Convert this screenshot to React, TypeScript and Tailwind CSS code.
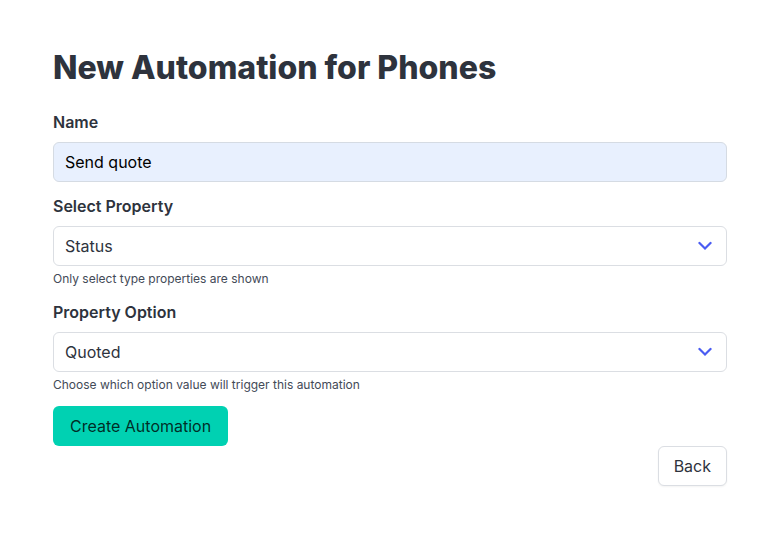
export default function App() {
  const Chevron = () => (
    <svg
      aria-hidden
      className="pointer-events-none absolute right-[15px] top-1/2 -translate-y-1/2"
      width="14"
      height="9"
      viewBox="0 0 14 9"
      fill="none"
    >
      <path d="M1.5 1.5 L7 7 L12.5 1.5" stroke="#4a5cf2" strokeWidth="2.2" strokeLinecap="square" />
    </svg>
  );

  return (
    <div className="min-h-screen bg-white px-[53px] pt-[50px] font-['Inter',sans-serif] text-[#2e333d]">
      <h1 className="mb-6 text-[32px] font-extrabold leading-[36px] text-[#2e333d]">
        New Automation for Phones
      </h1>

      {/* Name */}
      <div className="mb-3">
        <label className="mb-2 block text-[16px] font-semibold leading-6">Name</label>
        <input
          readOnly
          value="Send quote"
          className="h-10 w-full rounded-md border border-[#d5dbe3] bg-[#e8f0fe] px-[11px] text-[16px] text-black outline-none"
        />
      </div>

      {/* Select Property */}
      <div className="mb-3">
        <label className="mb-2 block text-[16px] font-semibold leading-6">Select Property</label>
        <div className="relative">
          <div className="flex h-10 w-full items-center rounded-md border border-[#dbdee3] bg-white px-[11px] text-[16px] text-[#2e333d]">
            Status
          </div>
          <Chevron />
        </div>
        <p className="mt-1 text-[12px] leading-[18px] text-[#434a57]">Only select type properties are shown</p>
      </div>

      {/* Property Option */}
      <div className="mb-3">
        <label className="mb-2 block text-[16px] font-semibold leading-6">Property Option</label>
        <div className="relative">
          <div className="flex h-10 w-full items-center rounded-md border border-[#dbdee3] bg-white px-[11px] text-[16px] text-[#2e333d]">
            Quoted
          </div>
          <Chevron />
        </div>
        <p className="mt-1 text-[12px] leading-[18px] text-[#434a57]">
          Choose which option value will trigger this automation
        </p>
      </div>

      <button className="h-10 rounded-md bg-[#00d1b2] px-[17px] text-[16px] text-black/80">Create Automation</button>

      <div className="flex justify-end">
        <button className="h-10 rounded-md border border-[#dbdee3] bg-white px-[15px] text-[16px] text-[#2e333d] shadow-[0_1px_2px_rgba(0,0,0,0.05)]">
          Back
        </button>
      </div>
    </div>
  );
}
